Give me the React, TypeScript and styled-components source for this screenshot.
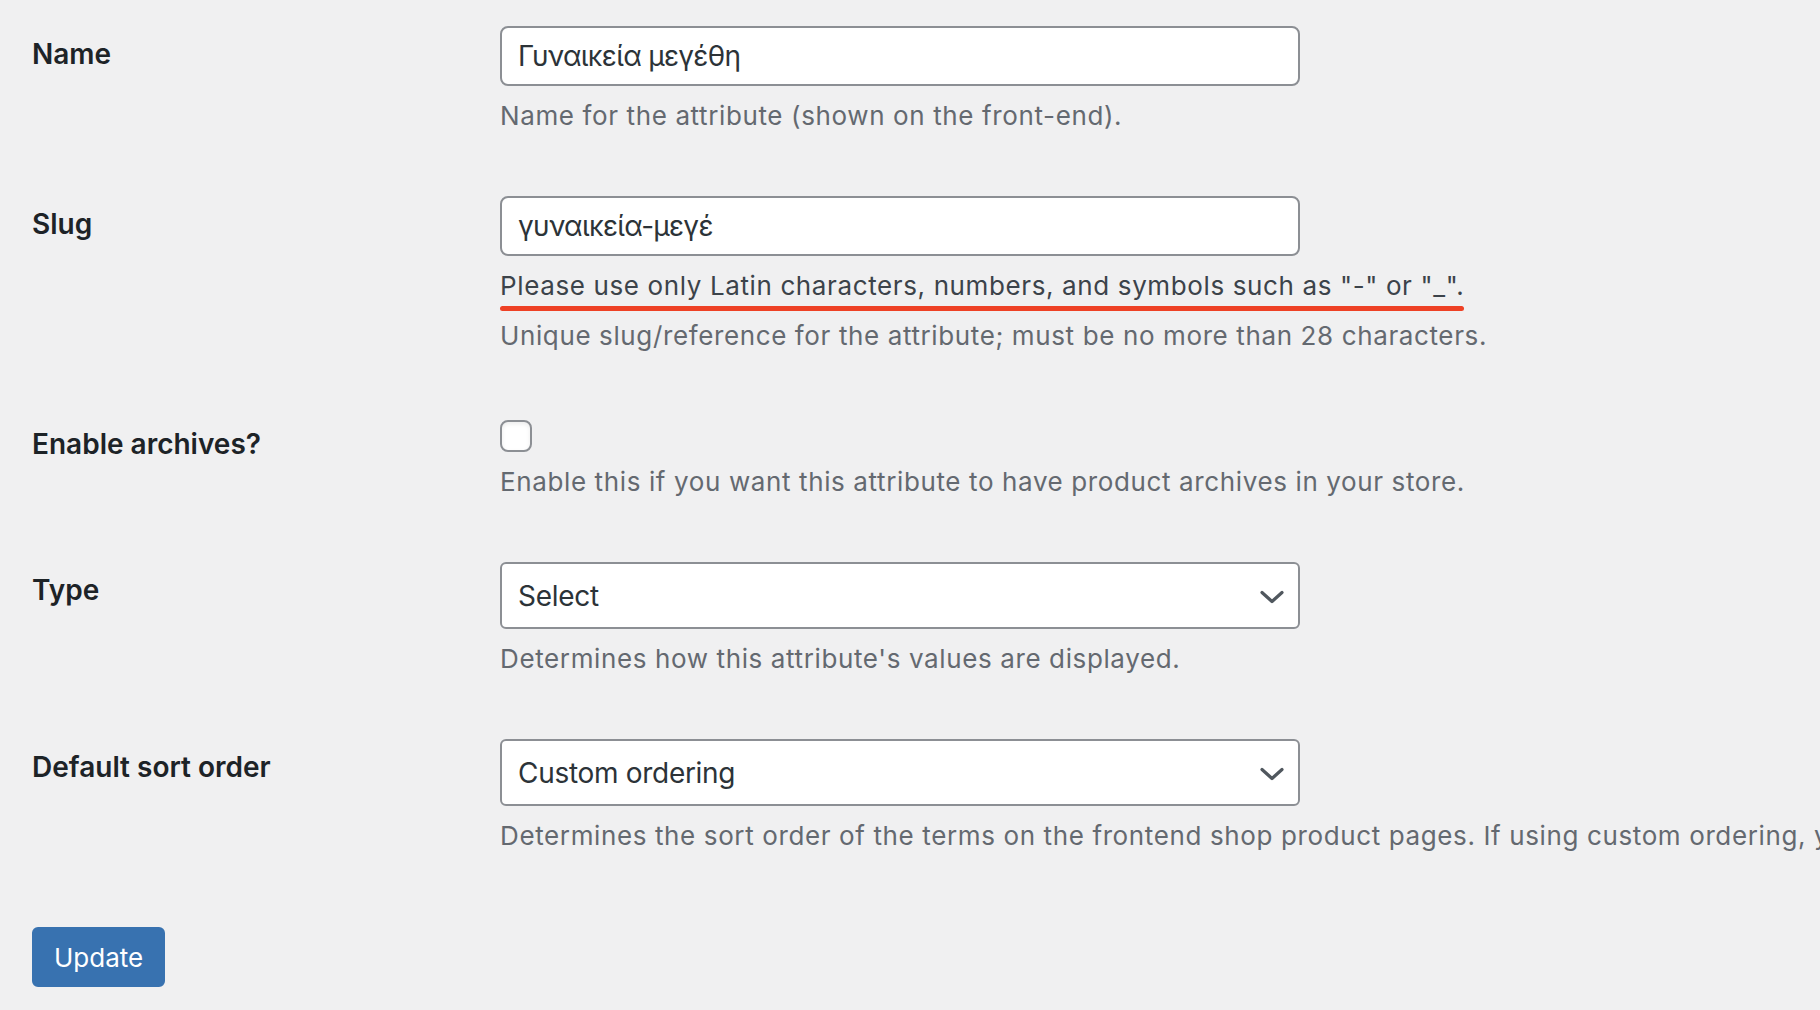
import React from "react";
import styled, { createGlobalStyle } from "styled-components";

const GlobalStyle = createGlobalStyle`
  html, body {
    margin: 0;
    padding: 0;
    background: #f0f0f1;
    overflow: hidden;
  }
  body {
    font-family: Inter, "Noto Sans", "Liberation Sans", sans-serif;
    color: #3c434a;
  }
`;

const Page = styled.div`
  width: 1820px;
  height: 1010px;
  padding-left: 32px;
  box-sizing: border-box;
  overflow: hidden;
`;

const Form = styled.form`
  margin-top: -4px;
`;

const Row = styled.div`
  display: grid;
  grid-template-columns: 468px 1fr;
`;

const Label = styled.label`
  padding-top: 40px;
  font-size: 28px;
  line-height: 36px;
  font-weight: 600;
  color: #1d2327;
`;

const Field = styled.div`
  padding: 30px 0;
  min-width: 0;
`;

const TextInput = styled.input`
  display: block;
  box-sizing: border-box;
  width: 800px;
  height: 60px;
  margin: 0;
  padding: 0 16px;
  border: 2px solid #8c8f94;
  border-radius: 8px;
  background: #fff;
  font-family: inherit;
  font-size: 28px;
  letter-spacing: -0.7px;
  color: #2c3338;
  outline: none;
`;

const SelectWrap = styled.div`
  position: relative;
  width: 800px;
`;

const Select = styled.select`
  display: block;
  box-sizing: border-box;
  width: 100%;
  height: 67px;
  margin: 0;
  padding: 0 48px 0 16px;
  border: 2px solid #8c8f94;
  border-radius: 6px;
  background: #fff;
  font-family: inherit;
  font-size: 28px;
  letter-spacing: -0.3px;
  color: #2c3338;
  appearance: none;
  -webkit-appearance: none;
  outline: none;
`;

const Chevron = styled.svg`
  position: absolute;
  right: 16px;
  top: 50%;
  width: 24px;
  height: 14px;
  margin-top: -6px;
  pointer-events: none;
`;

const Checkbox = styled.input`
  display: block;
  appearance: none;
  -webkit-appearance: none;
  box-sizing: border-box;
  width: 32px;
  height: 32px;
  margin: 4px 0 0;
  border: 2px solid #8c8f94;
  border-radius: 8px;
  background: #fff;
  box-shadow: inset 0 2px 4px rgba(0, 0, 0, 0.08);
`;

const Description = styled.p<{ $strong?: boolean }>`
  margin: 10px 0 0;
  font-size: 26px;
  line-height: 40px;
  letter-spacing: 0.62px;
  color: ${(p) => (p.$strong ? "#3c434a" : "#646970")};
  white-space: nowrap;
`;

const Marked = styled.span`
  position: relative;
  display: inline-block;
  &::after {
    content: "";
    position: absolute;
    left: 0;
    right: 0;
    bottom: -5px;
    height: 5px;
    border-radius: 3px;
    background: #ee4125;
  }
`;

const Submit = styled.div`
  padding-top: 41px;
`;

const Button = styled.button`
  height: 60px;
  padding: 0 20px;
  border: 2px solid #3872b0;
  border-radius: 6px;
  background: #3872b0;
  color: #fff;
  font-family: inherit;
  font-size: 26px;
  cursor: pointer;
`;

const ChevronIcon = () => (
  <Chevron viewBox="0 0 24 14" fill="none">
    <path
      d="M2 2.5l10 9 10-9"
      stroke="#50575e"
      strokeWidth="3.2"
      strokeLinecap="round"
      strokeLinejoin="round"
    />
  </Chevron>
);

export default function App() {
  return (
    <>
      <GlobalStyle />
      <Page>
        <Form onSubmit={(e) => e.preventDefault()}>
          <Row>
            <Label htmlFor="attribute_label">Name</Label>
            <Field>
              <TextInput id="attribute_label" defaultValue="Γυναικεία μεγέθη" />
              <Description>Name for the attribute (shown on the front-end).</Description>
            </Field>
          </Row>
          <Row>
            <Label htmlFor="attribute_name">Slug</Label>
            <Field>
              <TextInput id="attribute_name" defaultValue="γυναικεία-μεγέ" />
              <Description $strong>
                <Marked>
                  Please use only Latin characters, numbers, and symbols such as "-" or "_".
                </Marked>
              </Description>
              <Description>
                Unique slug/reference for the attribute; must be no more than 28 characters.
              </Description>
            </Field>
          </Row>
          <Row>
            <Label htmlFor="attribute_public">Enable archives?</Label>
            <Field>
              <Checkbox id="attribute_public" type="checkbox" />
              <Description>
                Enable this if you want this attribute to have product archives in your store.
              </Description>
            </Field>
          </Row>
          <Row>
            <Label htmlFor="attribute_type">Type</Label>
            <Field>
              <SelectWrap>
                <Select id="attribute_type" defaultValue="select">
                  <option value="select">Select</option>
                </Select>
                <ChevronIcon />
              </SelectWrap>
              <Description>Determines how this attribute's values are displayed.</Description>
            </Field>
          </Row>
          <Row>
            <Label htmlFor="attribute_orderby">Default sort order</Label>
            <Field>
              <SelectWrap>
                <Select id="attribute_orderby" defaultValue="menu_order">
                  <option value="menu_order">Custom ordering</option>
                </Select>
                <ChevronIcon />
              </SelectWrap>
              <Description>
                Determines the sort order of the terms on the frontend shop product pages. If using
                custom ordering, you can drag and drop the terms in this attribute.
              </Description>
            </Field>
          </Row>
          <Submit>
            <Button type="submit">Update</Button>
          </Submit>
        </Form>
      </Page>
    </>
  );
}
